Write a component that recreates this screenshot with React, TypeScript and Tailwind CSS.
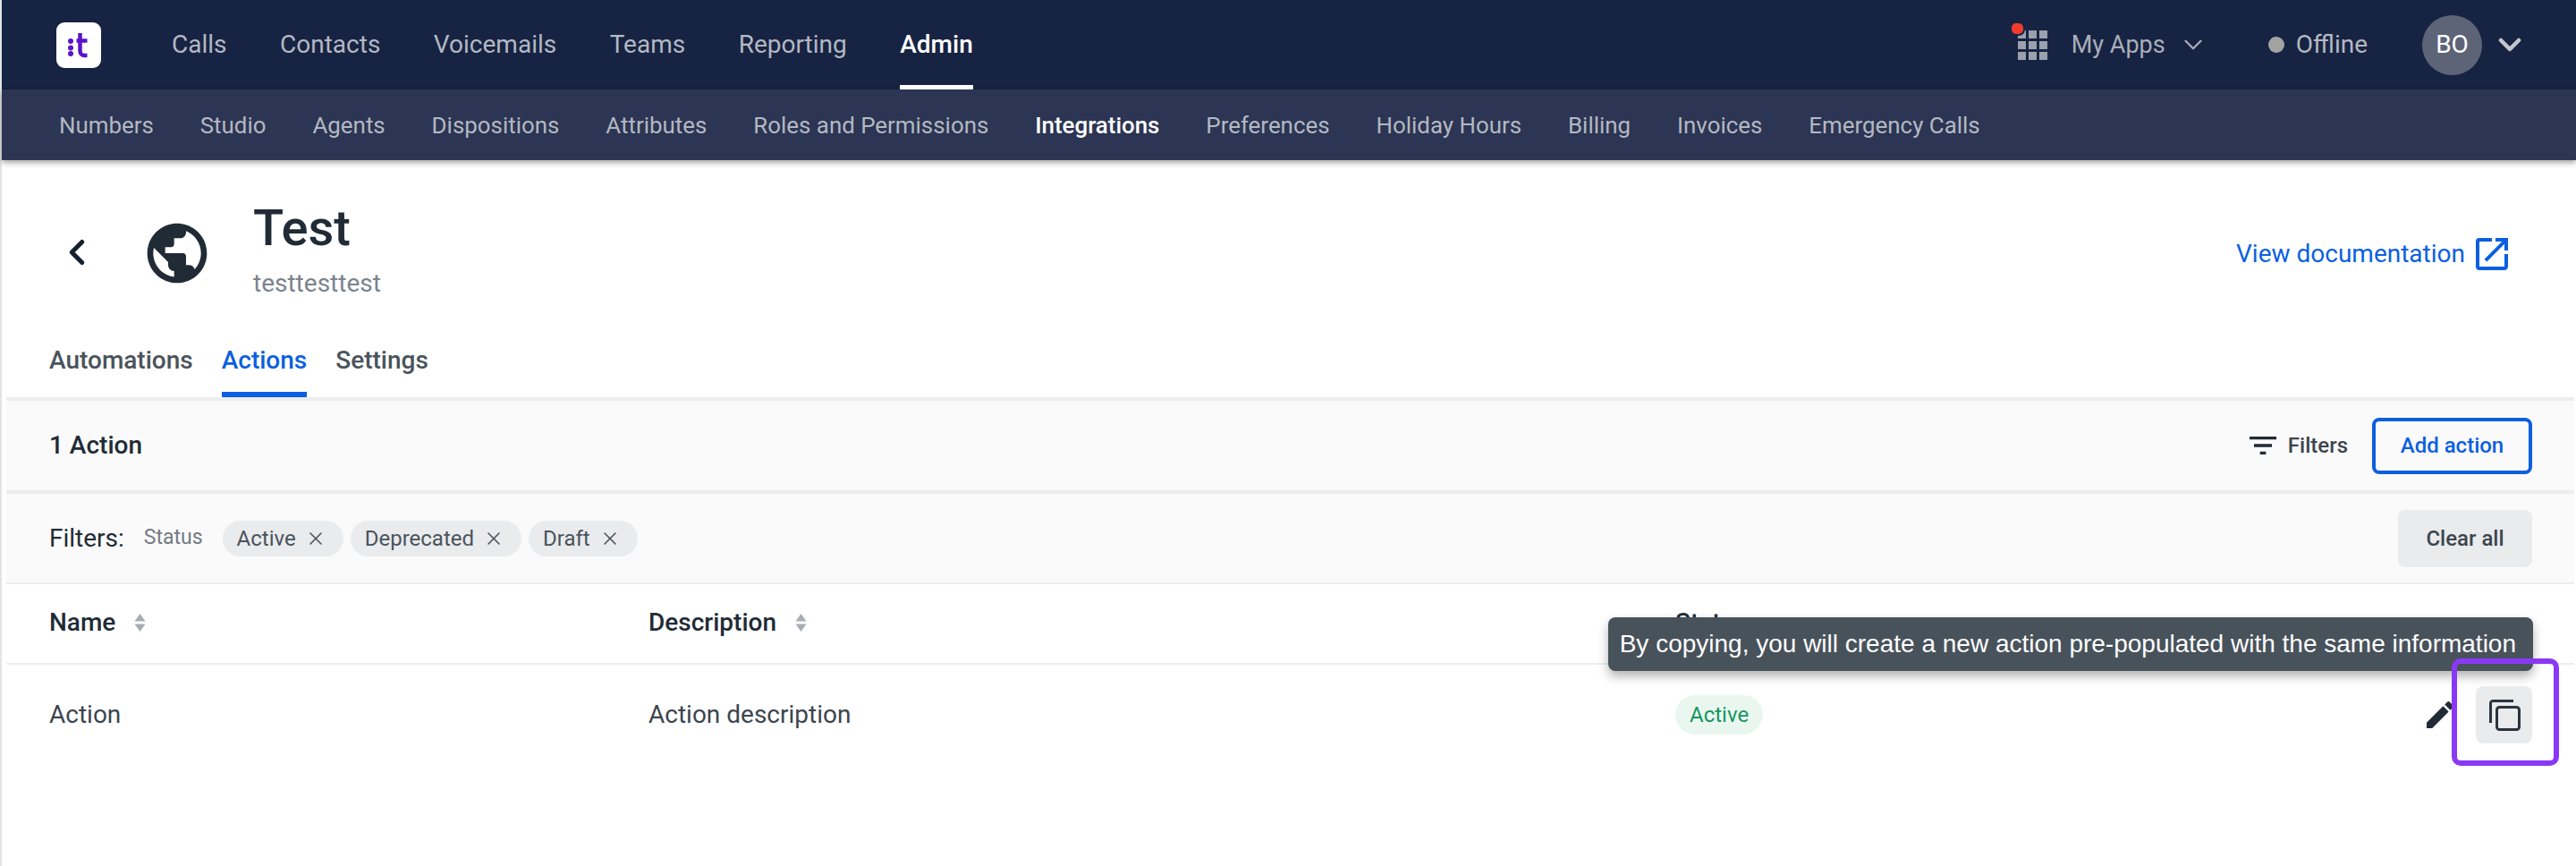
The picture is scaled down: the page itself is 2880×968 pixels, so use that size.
import React from 'react';
import { ChevronDown, ChevronLeft, X } from 'lucide-react';
import { MdPublic, MdEdit, MdFilterList, MdOpenInNew } from 'react-icons/md';

const mainNav = ['Calls', 'Contacts', 'Voicemails', 'Teams', 'Reporting', 'Admin'];
const subNav = [
  'Numbers',
  'Studio',
  'Agents',
  'Dispositions',
  'Attributes',
  'Roles and Permissions',
  'Integrations',
  'Preferences',
  'Holiday Hours',
  'Billing',
  'Invoices',
  'Emergency Calls',
];
const filterChips = ['Active', 'Deprecated', 'Draft'];

function SortIcon({ className }: { className: string }) {
  return (
    <svg width="13" height="20" viewBox="0 0 13 20" className={`text-[#a6adb5] ${className}`}>
      <path d="M6.5 0l6 8.5H.5z M6.5 20l-6-8.5h12z" fill="currentColor" />
    </svg>
  );
}

function Logo() {
  return (
    <div className="flex h-[51px] w-[50px] items-center justify-center rounded-[9px] bg-white">
      <svg width="26" height="30" viewBox="0 0 26 30" className="text-[#5b14c9]">
        <g fill="currentColor">
          <circle cx="4" cy="11" r="3" />
          <circle cx="4" cy="18.5" r="3" />
          <circle cx="4" cy="25" r="3" />
        </g>
        <path d="M14.5 2v20a5 5 0 0 0 5 5h3 M10.5 10.5h12" fill="none" stroke="currentColor" strokeWidth="4.5" />
      </svg>
    </div>
  );
}

function CopyIcon() {
  return (
    <svg width="36" height="36" viewBox="0 0 36 36" fill="none" stroke="#2b343d" strokeWidth="3">
      <path d="M2.5 27V5a2.5 2.5 0 0 1 2.5-2.5h23" />
      <rect x="9.5" y="9.5" width="25" height="25" rx="3" />
    </svg>
  );
}

export default function App() {
  return (
    <div className="min-h-[968px] border-l-2 border-[#e3e3e3] bg-white font-['Roboto',sans-serif] text-[#212b36]">
      {/* Top nav */}
      <div className="flex h-[100px] items-center bg-[#172342] pr-[54px] pl-[61px]">
        <Logo />
        <div className="ml-[79px] flex h-full items-center gap-[59.5px]">
          {mainNav.map((item) => (
            <div key={item} className={`relative flex h-full items-center text-[28px] ${item === 'Admin' ? 'font-medium text-white' : 'text-[#b3b8c2]'}`}>
              {item}
              {item === 'Admin' && <div className="absolute right-0 bottom-0 left-0 h-[5px] bg-white" />}
            </div>
          ))}
        </div>
        <div className="ml-auto flex items-center">
          <div className="relative grid grid-cols-3 gap-[3px]">
            {Array.from({ length: 9 }).map((_, i) => (
              <div key={i} className="h-[9px] w-[9px] bg-[#9aa0ac]" />
            ))}
            <div className="absolute top-[-10px] left-[-9px] h-[16px] w-[17px] rounded-[7px] border-2 border-[#172342] bg-[#f23c30]" />
          </div>
          <span className="ml-[27px] text-[27px] text-[#a9aeba]">My Apps</span>
          <ChevronDown className="ml-[14px] text-[#a9aeba]" size={34} strokeWidth={1.6} />
          <div className="ml-[67px] h-[18px] w-[18px] rounded-full bg-[#a3a3a3]" />
          <span className="ml-[13px] text-[28px] text-[#b3b8c2]">Offline</span>
          <div className="ml-[61px] flex h-[67px] w-[67px] items-center justify-center rounded-full bg-[#5d6478] text-[28px] text-white">
            BO
          </div>
          <ChevronDown className="ml-[11px] text-[#c2c6cd]" size={40} strokeWidth={2.75} />
        </div>
      </div>

      {/* Sub nav */}
      <div className="flex h-[79px] items-center gap-[51.9px] bg-[#2c3553] pt-[1px] pl-[64px] shadow-[0_3px_6px_rgba(0,0,0,0.35)]">
        {subNav.map((item) => (
          <span key={item} className={`text-[25.9px] ${item === 'Integrations' ? 'font-medium text-white' : 'text-[#b3b8c2]'}`}>
            {item}
          </span>
        ))}
      </div>

      {/* Page header */}
      <div className="flex items-start pt-[42px] pr-[70px] pl-[61px]">
        <ChevronLeft className="mt-[38px] text-[#14202e]" size={46} strokeWidth={2.6} />
        <MdPublic className="mt-[22px] ml-[49px] text-[#212b36]" size={80} />
        <div className="ml-[45px]">
          <div className="text-[56px] leading-[68px] font-medium">Test</div>
          <div className="mt-[7px] text-[28px] text-[#7b838c]">testtesttest</div>
        </div>
        <div className="mt-[39px] ml-auto flex items-center text-[28px] text-[#0b5fe0]">
          View documentation
          <MdOpenInNew className="ml-[6px]" size={48} />
        </div>
      </div>

      {/* Tabs */}
      <div className="mt-[44px] flex h-[62px] gap-[32px] pl-[53px] text-[28px] font-medium text-[#4a535c]">
        <div>Automations</div>
        <div className="border-b-[6px] border-[#0b5fe0] text-[#0b5fe0]">Actions</div>
        <div>Settings</div>
      </div>

      <div className="mr-[2px] ml-[5px]">
        {/* Toolbar */}
        <div className="flex h-[108px] items-center justify-between border-t-[4px] border-b-[4px] border-[#eceded] bg-[#fafafa] pr-[47px] pl-[48px]">
          <span className="text-[28px] font-medium">1 Action</span>
          <div className="flex items-center">
            <MdFilterList size={40} />
            <span className="ml-[8px] text-[24px] font-medium text-[#3c454e]">Filters</span>
            <div className="ml-[27px] flex h-[63px] w-[179px] items-center justify-center rounded-[8px] border-[4px] border-[#0b5fe0] text-[24px] font-medium text-[#0b5fe0]">
              Add action
            </div>
          </div>
        </div>

        {/* Active filters */}
        <div className="flex h-[101px] items-center border-b-[2px] border-[#eceded] bg-[#fafafa] pr-[47px] pl-[48px]">
          <span className="text-[28px]">Filters:</span>
          <span className="ml-[22px] text-[23px] text-[#737b84]">Status</span>
          <div className="ml-[22px] flex gap-[8px]">
            {filterChips.map((chip) => (
              <div key={chip} className="flex h-[40px] items-center rounded-full bg-[#e9ebed] pr-[19px] pl-[16px] text-[24px] text-[#4a535c]">
                {chip}
                <X className="ml-[10px]" size={24} strokeWidth={1.6} />
              </div>
            ))}
          </div>
          <div className="ml-auto flex h-[64px] w-[150px] items-center justify-center rounded-[8px] bg-[#e9ebed] text-[24px] font-medium text-[#3c454e]">
            Clear all
          </div>
        </div>

        {/* Table */}
        <div className="grid h-[90px] grid-cols-[670px_1148px_1fr] items-center border-b-[2px] border-[#eceded] pb-[3px] pl-[48px] text-[28px] font-medium">
          <div className="flex items-center">Name<SortIcon className="ml-[21px]" /></div>
          <div className="flex items-center">Description<SortIcon className="ml-[21px]" /></div>
          <div>Status</div>
        </div>
        <div className="relative grid h-[112px] grid-cols-[670px_1148px_1fr] items-center pl-[48px] text-[28px] text-[#3c454e]">
          <div>Action</div>
          <div>Action description</div>
          <div className="flex items-center justify-between pr-[47px]">
            <span className="rounded-full bg-[#eaf7f1] px-[16px] py-[4px] text-[24px] text-[#15965f]">Active</span>
            <div className="flex items-center gap-[20px]">
              <MdEdit className="text-[#212b36]" size={40} />
              <div className="flex h-[64px] w-[63px] items-center justify-center rounded-[8px] bg-[#e9ebed]">
                <CopyIcon />
              </div>
            </div>
          </div>

          {/* Tooltip */}
          <div className="absolute top-[-53px] right-[46px] flex h-[60px] items-center rounded-[8px] bg-[#48525b] pr-[19px] pl-[13px] font-['Liberation_Sans',sans-serif] text-[28px] whitespace-nowrap text-white shadow-[0_6px_12px_rgba(0,0,0,0.3)]">
            By copying, you will create a new action pre-populated with the same information
          </div>

          {/* Highlight box */}
          <div className="absolute top-[-7px] right-[17px] h-[120px] w-[120px] rounded-[10px] border-[6px] border-[#8a38f5]" />
        </div>
      </div>
    </div>
  );
}
